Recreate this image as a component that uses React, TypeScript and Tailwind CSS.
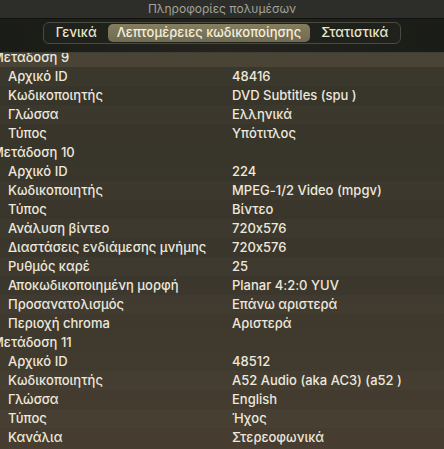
type Row = { label: string; value?: string; header?: boolean };

const rows: Row[] = [
  { label: "Αρχικό ID", value: "48416" },
  { label: "Κωδικοποιητής", value: "DVD Subtitles (spu )" },
  { label: "Γλώσσα", value: "Ελληνικά" },
  { label: "Τύπος", value: "Υπότιτλος" },
  { label: "Μετάδοση 10", header: true },
  { label: "Αρχικό ID", value: "224" },
  { label: "Κωδικοποιητής", value: "MPEG-1/2 Video (mpgv)" },
  { label: "Τύπος", value: "Βίντεο" },
  { label: "Ανάλυση βίντεο", value: "720x576" },
  { label: "Διαστάσεις ενδιάμεσης μνήμης", value: "720x576" },
  { label: "Ρυθμός καρέ", value: "25" },
  { label: "Αποκωδικοποιημένη μορφή", value: "Planar 4:2:0 YUV" },
  { label: "Προσανατολισμός", value: "Επάνω αριστερά" },
  { label: "Περιοχή chroma", value: "Αριστερά" },
  { label: "Μετάδοση 11", header: true },
  { label: "Αρχικό ID", value: "48512" },
  { label: "Κωδικοποιητής", value: "A52 Audio (aka AC3) (a52 )" },
  { label: "Γλώσσα", value: "English" },
  { label: "Τύπος", value: "Ήχος" },
  { label: "Κανάλια", value: "Στερεοφωνικά" },
];

const tabs = ["Γενικά", "Λεπτομέρειες κωδικοποίησης", "Στατιστικά"];

export default function App() {
  return (
    <div
      className="flex h-[449px] w-[444px] flex-col overflow-hidden bg-[#1c1d18] text-[13px] text-[#ede8dc] [font-feature-settings:'calt'_0]"
      style={{ fontFamily: 'Inter, "Noto Sans", sans-serif' }}
    >
      <div className="flex h-[19px] shrink-0 items-center justify-center border-b border-[#121310] bg-[#2d2e29] text-[12px] text-[#a3a29a]">
        Πληροφορίες πολυμέσων
      </div>
      <div className="flex h-[33px] shrink-0 items-start justify-center bg-gradient-to-r from-[#1a1c17] via-[#24231c] to-[#1a1c17] pt-[3px]">
        <div className="flex h-[22px] items-stretch rounded-[6px] border border-[#4a4b40] bg-[#1e211c] p-px text-[13px] font-medium text-[#ece5c9]">
          {tabs.map((t, i) => (
            <div
              key={t}
              className={
                i === 1
                  ? "flex items-center rounded-[5px] bg-gradient-to-b from-[#857d5f] to-[#6f6a52] px-[9px] text-[#f4efdc]"
                  : "flex items-center px-[11px]"
              }
            >
              {t}
            </div>
          ))}
        </div>
      </div>
      <div className="h-px shrink-0 bg-[#3f4035]" />
      <div className="flex-1 overflow-hidden bg-gradient-to-b from-[#37342a] via-[#3a362c] to-[#473d30] font-medium">
        <div className="-mt-[5px]">
          <div className="flex h-[19px] items-center bg-[#4a4437]">
            <span className="-ml-[8px]">Μετάδοση 9</span>
          </div>
          {rows.map((r, i) =>
            r.header ? (
              <div key={i} className="flex h-[19px] items-center">
                <span className="-ml-[8px]">{r.label}</span>
              </div>
            ) : (
              <div
                key={i}
                className={`flex h-[19px] items-center ${i % 2 === 0 ? "bg-white/[0.015]" : ""}`}
              >
                <span className="w-[232px] shrink-0 pl-[8px]">{r.label}</span>
                <span>{r.value}</span>
              </div>
            )
          )}
        </div>
      </div>
    </div>
  );
}
